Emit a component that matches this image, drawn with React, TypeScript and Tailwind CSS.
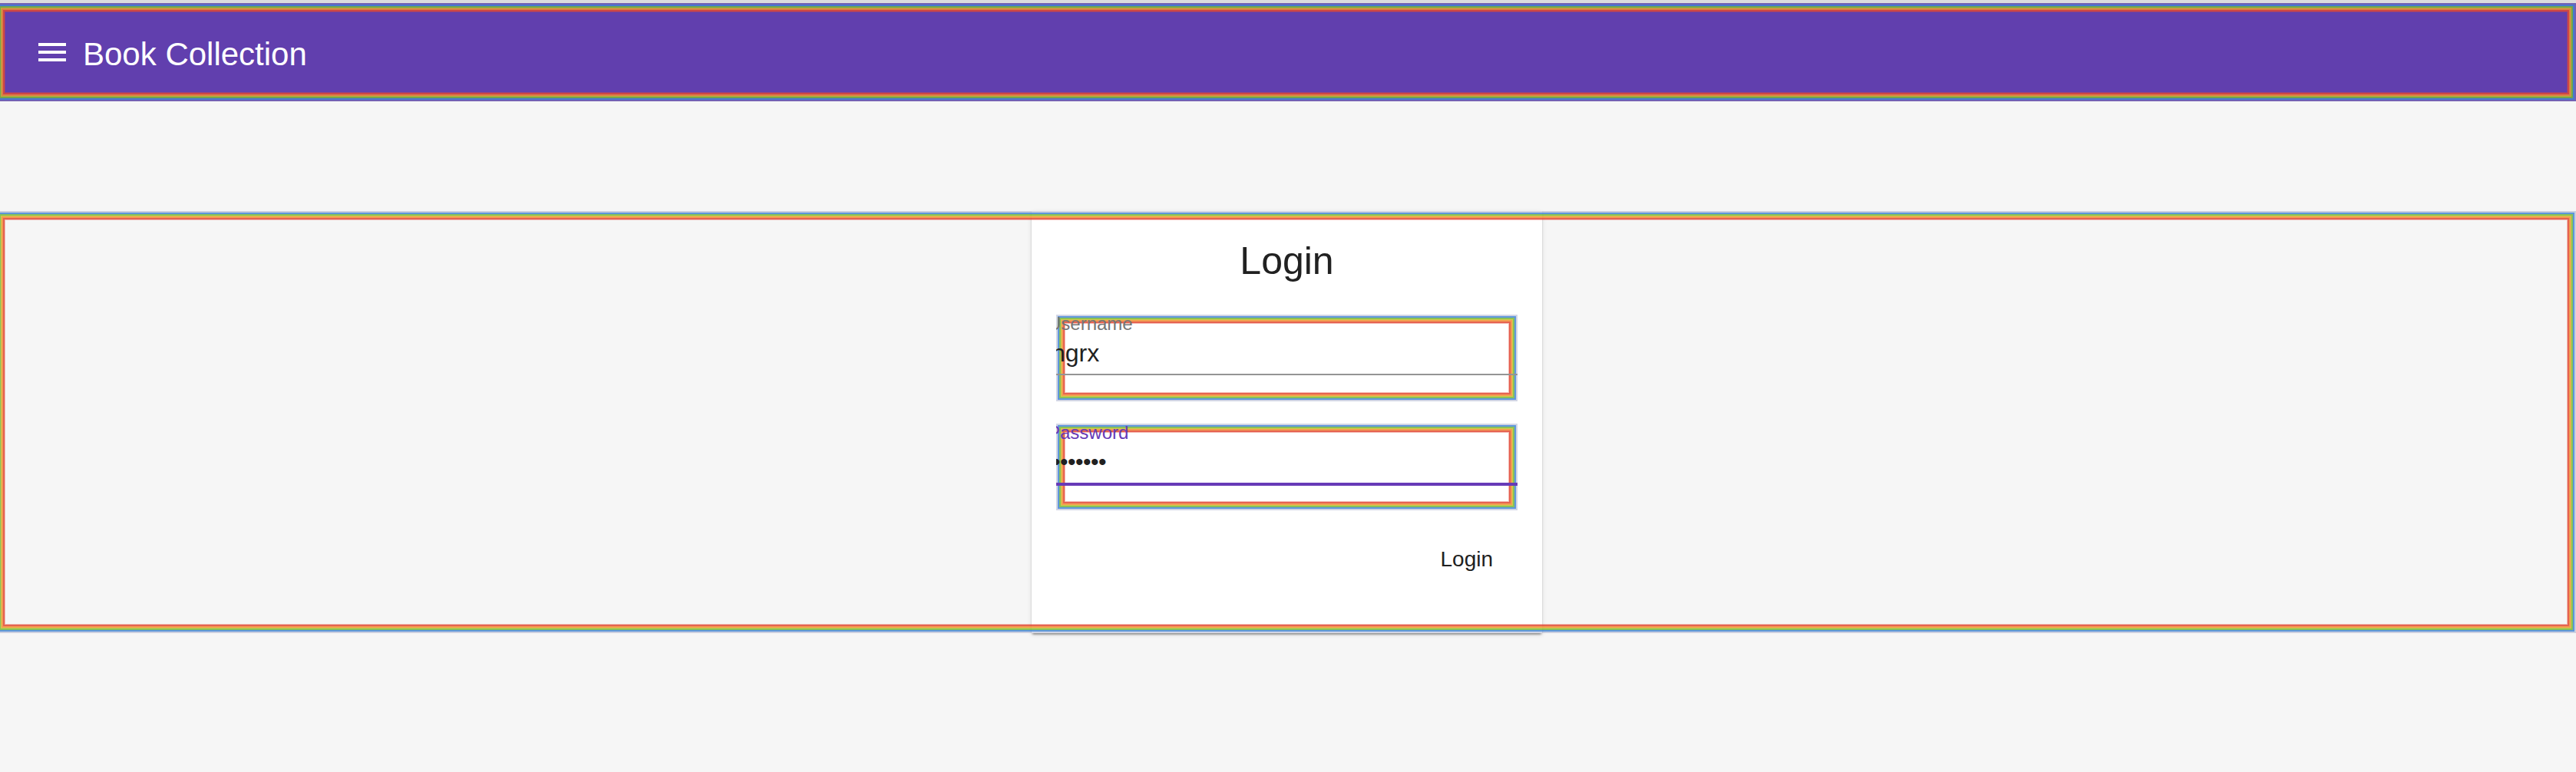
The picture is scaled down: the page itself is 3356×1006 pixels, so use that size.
import React from "react";

function Ring() {
  return (
    <div className="pointer-events-none absolute inset-0 border-2 border-[rgba(140,150,190,0.4)]">
      <div className="h-full w-full border-2 border-[rgba(66,133,214,0.85)]">
        <div className="h-full w-full border-2 border-[rgba(118,182,58,0.85)]">
          <div className="h-full w-full border border-[rgba(205,195,40,0.85)]">
            <div className="h-full w-full border-2 border-[rgba(240,140,50,0.85)]">
              <div className="h-full w-full border-2 border-[rgba(226,72,50,0.85)]">
                <div className="h-full w-full border border-[rgba(226,72,50,0.35)]" />
              </div>
            </div>
          </div>
        </div>
      </div>
    </div>
  );
}

function Field({
  label,
  value,
  focused,
  password,
}: {
  label: string;
  value: string;
  focused?: boolean;
  password?: boolean;
}) {
  return (
    <div className="relative h-[113px] w-full overflow-hidden">
      <Ring />
      <div className="relative">
        <div
          className={
            focused
              ? "-ml-[11px] text-[24px] leading-[24px] text-[#673ab7]"
              : "-ml-[11px] text-[24px] leading-[24px] text-[#757575]"
          }
        >
          {label}
        </div>
        <div
          className={
            password
              ? "-ml-[5px] mt-[10px] text-[30px] leading-[32px] tracking-[-0.5px] text-[#212121]"
              : "-ml-[6px] mt-[10px] text-[32px] leading-[32px] text-[#212121]"
          }
        >
          {value}
        </div>
        {focused ? (
          <div className="mt-[11px] h-[4px] w-full bg-[#673ab7]" />
        ) : (
          <div className="mt-[11px] h-[2px] w-full bg-[#949494]" />
        )}
      </div>
    </div>
  );
}

export default function App() {
  return (
    <div className="min-h-screen bg-[#f6f6f6] font-['Liberation_Sans',Arial,sans-serif]">
      <div className="h-[4px] w-full bg-[#dcdcdc]" />
      <div className="relative -ml-[5px] flex h-[128px] w-[calc(100%+5px)] items-center bg-[#613fae] pl-[49px]">
        <svg width="48" height="48" viewBox="0 0 24 24" fill="white">
          <path d="M3 18h18v-2H3v2zm0-5h18v-2H3v2zm0-7v2h18V6H3z" />
        </svg>
        <span className="ml-[16px] mt-[5px] text-[42px] font-medium leading-none text-white">
          Book Collection
        </span>
        <Ring />
      </div>

      <div className="relative -ml-[5px] mt-[143px] flex h-[550px] w-[calc(100%+5px)] justify-center">
        <div className="ml-[2px] flex h-full w-[665px] flex-col bg-white px-[32px] pt-[37px] shadow-[0_4px_2px_-2px_rgba(0,0,0,0.2),0_2px_2px_0_rgba(0,0,0,0.14),0_2px_6px_0_rgba(0,0,0,0.12)]">
          <h2 className="text-center text-[50px] leading-[56px] text-[#212121]">Login</h2>
          <div className="mt-[42px]">
            <Field label="Username" value="ngrx" />
          </div>
          <div className="mt-[29px]">
            <Field label="Password" value="•••••••" focused password />
          </div>
          <div className="mt-[28px] flex justify-end">
            <button className="flex h-[72px] items-center px-[32px] text-[28px] font-medium text-[#212121]">
              Login
            </button>
          </div>
        </div>
        <Ring />
      </div>
    </div>
  );
}
